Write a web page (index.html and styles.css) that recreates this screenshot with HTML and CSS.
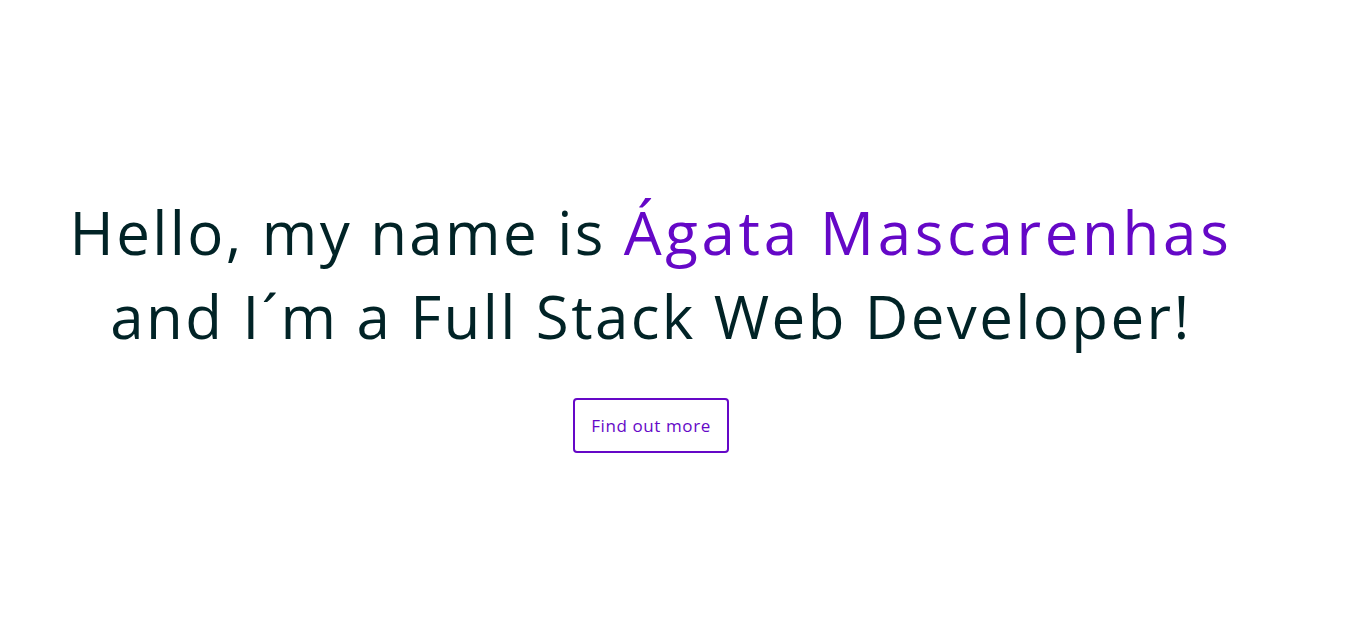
FILE: index.html
```html
<!DOCTYPE html>
<html lang="en">
<head>
<meta charset="utf-8">
<title>Ágata Mascarenhas</title>
<link rel="stylesheet" href="styles.css">
</head>
<body>
<main class="hero">
  <h1 class="hero-title">Hello, my name is <span class="accent">Ágata Mascarenhas</span><br>and I´m a Full Stack Web Developer!</h1>
  <a class="btn-outline" href="#about">Find out more</a>
</main>
</body>
</html>
```

FILE: styles.css
```css
html, body {
  margin: 0;
  padding: 0;
  background: #ffffff;
}

body {
  font-family: "Open Sans", "Noto Sans", sans-serif;
  color: #012326;
}

.hero {
  width: 1302px;
  height: 622px;
  box-sizing: border-box;
  padding-top: 190px;
  display: flex;
  flex-direction: column;
  align-items: center;
}

.hero-title {
  margin: 0;
  font-size: 60px;
  font-weight: 400;
  line-height: 84px;
  text-align: center;
  color: #012326;
  letter-spacing: 2.4px;
  white-space: nowrap;
}

.accent {
  color: #6508c7;
  letter-spacing: 3.7px;
}

.btn-outline {
  margin-top: 40px;
  display: inline-flex;
  align-items: center;
  justify-content: center;
  width: 156px;
  height: 55px;
  box-sizing: border-box;
  border: 2px solid #6508c7;
  border-radius: 4px;
  color: #6508c7;
  font-size: 17px;
  letter-spacing: 0.6px;
  text-decoration: none;
}
```
